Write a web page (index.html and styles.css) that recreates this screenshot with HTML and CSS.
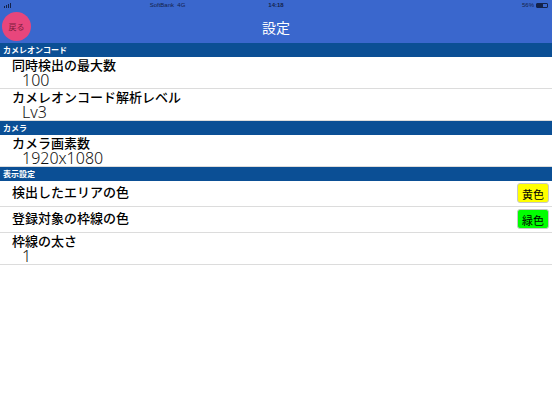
FILE: index.html
```html
<!DOCTYPE html>
<html lang="ja">
<head>
  <meta charset="UTF-8" />
  <meta name="viewport" content="width=device-width, initial-scale=1.0" />
  <title>設定</title>
  <link rel="stylesheet" href="styles.css">
</head>
<body>
  <header class="topbar">
    <div class="status">
      <span class="carrier"><span class="bars"><i></i><i></i><i></i><i></i></span>SoftBank&nbsp;&nbsp;4G</span>
      <span class="clock">14:18</span>
      <span class="battery">56% <span class="batt"><span class="batt-fill"></span></span></span>
    </div>
    <div class="navbar">
      <button class="back">戻る</button>
      <h1>設定</h1>
    </div>
  </header>

  <div class="section">カメレオンコード</div>
  <div class="row">
    <div class="label">同時検出の最大数</div>
    <div class="value">100</div>
  </div>
  <div class="row">
    <div class="label">カメレオンコード解析レベル</div>
    <div class="value">Lv3</div>
  </div>

  <div class="section">カメラ</div>
  <div class="row">
    <div class="label">カメラ画素数</div>
    <div class="value">1920x1080</div>
  </div>

  <div class="section">表示設定</div>
  <div class="row row-inline">
    <div class="label">検出したエリアの色</div>
    <span class="badge yellow">黄色</span>
  </div>
  <div class="row row-inline">
    <div class="label">登録対象の枠線の色</div>
    <span class="badge green">緑色</span>
  </div>
  <div class="row">
    <div class="label">枠線の太さ</div>
    <div class="value">1</div>
  </div>
</body>
</html>
```

FILE: styles.css
```css
* {
  margin: 0;
  padding: 0;
  box-sizing: border-box;
}
body {
  font-family: "Noto Sans CJK JP", "Noto Sans", sans-serif;
  background: #ffffff;
  color: #000000;
  width: 552px;
  height: 414px;
  overflow: hidden;
}
.topbar {
  background: #3a67cd;
  height: 43px;
}
.status {
  height: 11px;
  display: flex;
  justify-content: space-between;
  align-items: center;
  padding: 0 4px;
  font-size: 6px;
  line-height: 11px;
  color: #14224a;
  font-family: "Liberation Sans", sans-serif;
}
.status span { flex: 1; }
.carrier {
  display: flex;
  align-items: center;
}
.bars {
  display: inline-flex;
  align-items: flex-end;
  gap: 1px;
  margin-right: 2px;
  height: 5px;
}
.bars i {
  display: block;
  width: 1px;
  background: #14224a;
}
.bars i:nth-child(1) { height: 2px; }
.bars i:nth-child(2) { height: 3px; }
.bars i:nth-child(3) { height: 4px; }
.bars i:nth-child(4) { height: 5px; }
.clock {
  text-align: center;
  font-weight: bold;
}
.battery {
  display: flex;
  justify-content: flex-end;
  align-items: center;
  gap: 2px;
}
.batt {
  flex: none !important;
  width: 12px;
  height: 5px;
  border: 1px solid #14224a;
  border-radius: 1px;
  display: flex;
}
.batt-fill {
  flex: none !important;
  width: 6px;
  background: #14224a;
}
.navbar {
  position: relative;
  height: 32px;
  display: flex;
  align-items: center;
  justify-content: center;
}
.navbar h1 {
  font-size: 14px;
  font-weight: normal;
  color: #ffffff;
  line-height: 32px;
}
.back {
  position: absolute;
  left: 2px;
  top: 1px;
  width: 29px;
  height: 29px;
  border-radius: 50%;
  border: none;
  background: #e8467c;
  color: #7e1d3c;
  font-size: 8px;
  font-family: inherit;
}
.section {
  background: #0b4f95;
  color: #ffffff;
  font-size: 8px;
  font-weight: bold;
  height: 14px;
  line-height: 14px;
  padding-left: 3px;
}
.row {
  border-bottom: 1px solid #dcdcdc;
  padding-left: 12px;
}
.label {
  font-size: 13px;
  font-weight: 500;
  line-height: 14px;
  padding-top: 1px;
}
.value {
  font-size: 16px;
  line-height: 16px;
  padding-left: 10px;
  font-family: "Noto Sans", sans-serif;
  font-weight: 300;
  color: #111111;
}
.row-inline {
  display: flex;
  justify-content: space-between;
  align-items: flex-start;
  padding: 2px 3px 3px 12px;
}
.row-inline .label {
  padding-top: 2px;
}
.badge {
  font-size: 11px;
  line-height: 20px;
  height: 20px;
  padding: 0 4px;
  border: 1px solid #c8c8c8;
  border-radius: 3px;
}
.yellow { background: #ffff00; }
.green { background: #00ff00; }
```
